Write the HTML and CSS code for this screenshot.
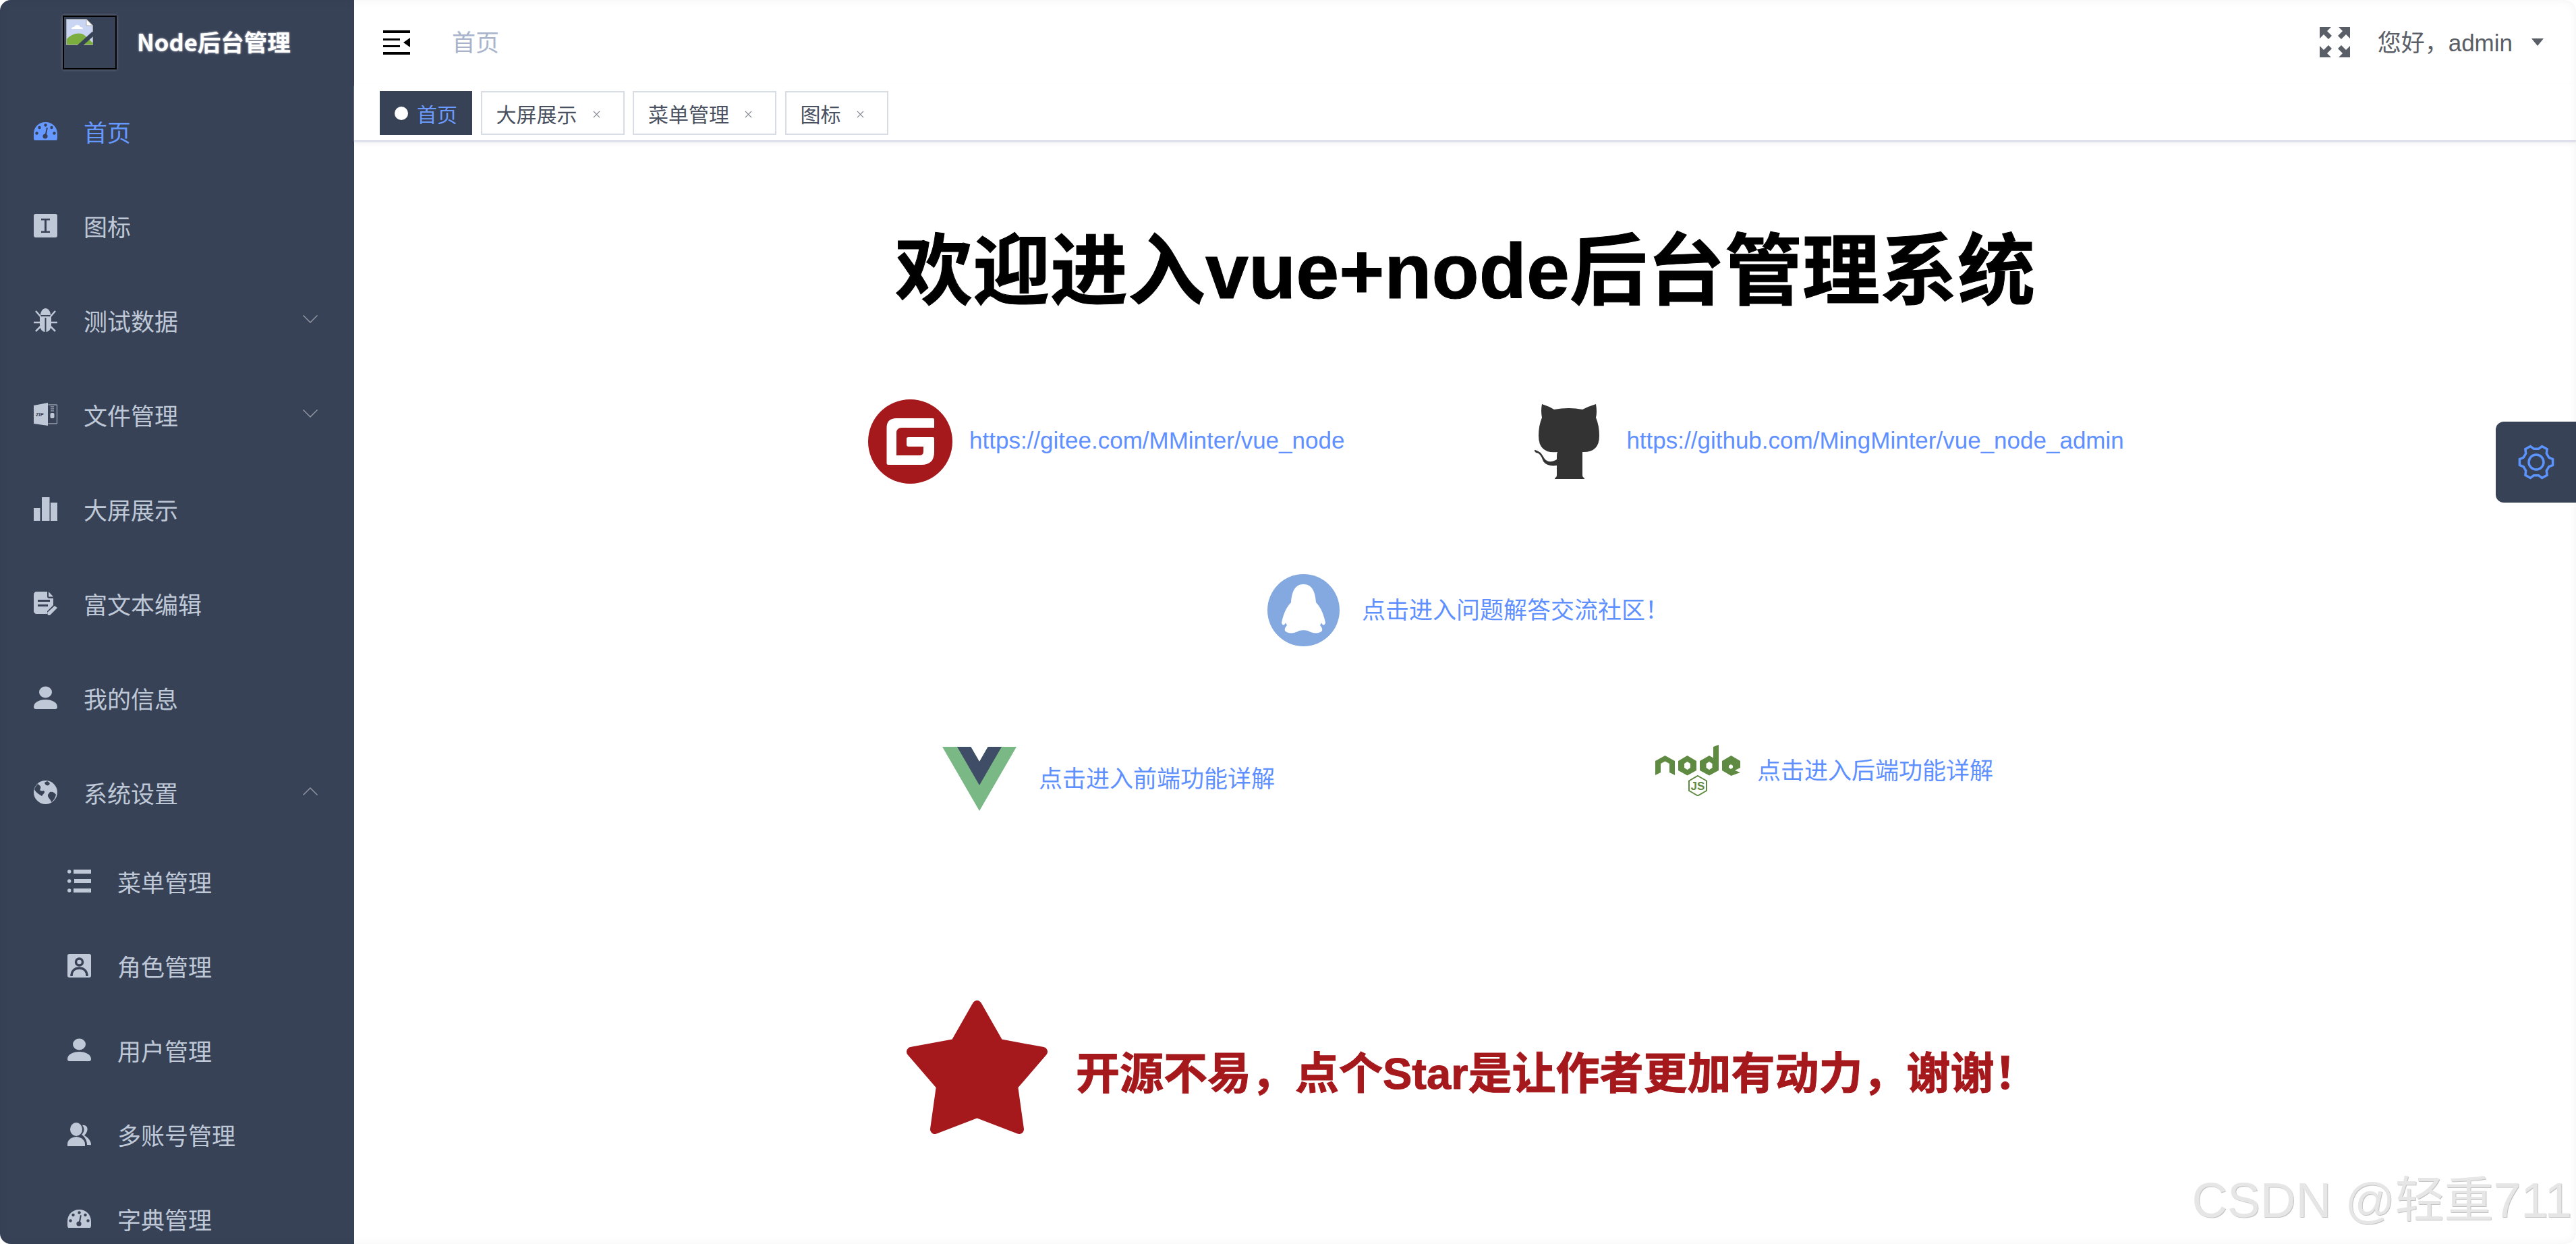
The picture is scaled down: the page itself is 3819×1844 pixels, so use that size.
FILE: index.html
```html
<!DOCTYPE html>
<html lang="zh-CN">
<head>
  <meta charset="UTF-8">
  <title>Node后台管理</title>
  <link rel="stylesheet" href="styles.css">
</head>
<body>
  <svg class="icon-defs" width="0" height="0">
    <symbol id="i-dashboard" viewBox="0 0 35 35">
      <path d="M1 31C-1 27 0 22 0 21C0 11 8 4 17.5 4S35 11 35 21C35 22 36 27 34 31Z"/>
      <g class="cut">
        <circle cx="17.5" cy="8.5" r="2.2"/><circle cx="8.5" cy="12" r="2.2"/><circle cx="26.5" cy="12" r="2.2"/>
        <circle cx="4.5" cy="20.5" r="2.2"/><circle cx="30.5" cy="20.5" r="2.2"/><circle cx="17" cy="25" r="3.6"/>
        <path d="M19 12l1.8.4-2 11-2.2-.4z"/>
      </g>
    </symbol>
    <symbol id="i-person" viewBox="0 0 35 35">
      <ellipse cx="17.5" cy="9" rx="9.5" ry="8.5"/>
      <path d="M0 31C0 24 8 20 17.5 20S35 24 35 31C35 33 34 34 32 34H3C1 34 0 33 0 31Z"/>
    </symbol>
  </svg>

  <div class="app">
    <aside class="sidebar">
      <div class="logo">
        <div class="logo-img">
          <svg class="broken-img" viewBox="0 0 40 39">
            <path d="M.5.5H30L39.500 10V38.500H.5Z" fill="#c9d5f2" stroke="#a8a8a8"/>
            <path d="M30 .5L39.500 10H30Z" fill="#fff" stroke="#a8a8a8"/>
            <path d="M8 15c0-3 3-3 4-3 1-4 8-4 9 0 3 0 4 1 4 3Z" fill="#fff"/>
            <path d="M1 38V30C8 22 20 19 27 24L40 36V38Z" fill="#7cad3f"/>
            <path d="M41 21L19 41" stroke="#384257" stroke-width="6"/>
          </svg>
        </div>
        <span class="logo-title">Node后台管理</span>
      </div>

      <nav class="menu">
        <a class="menu-item active">
          <svg class="menu-icon"><use href="#i-dashboard"/></svg>
          <span>首页</span>
        </a>
        <a class="menu-item">
          <svg class="menu-icon" viewBox="0 0 35 35">
            <rect width="35" height="35" rx="3"/>
            <path class="cut" d="M11 7H24V9.500H19V25.500H24V28H11V25.500H16V9.500H11Z"/>
          </svg>
          <span>图标</span>
        </a>
        <a class="menu-item">
          <svg class="menu-icon" viewBox="0 0 35 35">
            <path d="M10 10C10 4 14 0 17.500 0S25 4 25 10Z"/>
            <path d="M9 12H26V24C26 31 22 35 18.500 35V14H16.500V35C13 35 9 31 9 24Z"/>
            <path class="legs" d="M3 4L10 12M32 4L25 12M0 21H9M35 21H26M3 34L10 27M32 34L25 27"/>
          </svg>
          <span>测试数据</span>
          <svg class="chevron" viewBox="0 0 22 12"><path d="M.5 .5L11 11 21.500 .5"/></svg>
        </a>
        <a class="menu-item">
          <svg class="menu-icon" viewBox="0 0 35 35">
            <path d="M0 4L21 0V34L0 31Z"/>
            <text class="zip-text" x="3" y="20">ZIP</text>
            <path class="zip-line" d="M21.500 3H34.500V31H21.500M25 6H30M25 9H30M25 12H30"/>
            <rect x="24.500" y="15" width="6" height="8" rx="2"/>
          </svg>
          <span>文件管理</span>
          <svg class="chevron" viewBox="0 0 22 12"><path d="M.5 .5L11 11 21.500 .5"/></svg>
        </a>
        <a class="menu-item">
          <svg class="menu-icon" viewBox="0 0 35 35">
            <path d="M0 16H9.500V35H0ZM12 0H23.500V35H12ZM25 8H35V35H25Z"/>
          </svg>
          <span>大屏展示</span>
        </a>
        <a class="menu-item">
          <svg class="menu-icon" viewBox="0 0 35 35">
            <path d="M4 0H20V7C20 9 21 10 23 10H29V20L20 29V33H4C2 33 0 31 0 29V4C0 2 2 0 4 0ZM22 0L29 7.500H22Z"/>
            <path class="cut-line" d="M6 13.500H24M6 20.500H21"/>
            <path d="M21 35L20 31 31 21 35 24 24 35Z" class="pen"/>
          </svg>
          <span>富文本编辑</span>
        </a>
        <a class="menu-item">
          <svg class="menu-icon"><use href="#i-person"/></svg>
          <span>我的信息</span>
        </a>
        <a class="menu-item">
          <svg class="menu-icon" viewBox="0 0 35 35">
            <circle cx="17.500" cy="17.500" r="17.500"/>
            <path class="cut" d="M6 5C10 8 11 9 10 12 8 15 11 16 15 15 18 17 14 20 12 23 9 21 3 18 1 13 2 10 4 7 6 5ZM20 1C24 3 25 5 22 7 18 8 17 6 16 3ZM24 17C28 16 31 18 33 21 32 26 29 30 26 32 25 27 20 25 21 21Z"/>
          </svg>
          <span>系统设置</span>
          <svg class="chevron" viewBox="0 0 22 12"><path d="M.5 11.500L11 1 21.500 11.500"/></svg>
        </a>
        <div class="submenu">
          <a class="submenu-item">
            <svg class="menu-icon" viewBox="0 0 35 35">
              <circle cx="2.700" cy="3" r="2.700"/><circle cx="2.700" cy="17" r="2.700"/><circle cx="2.700" cy="31" r="2.700"/>
              <path d="M9 0H35V6H9ZM10 14H35V20H10ZM9 28H35V34H9Z"/>
            </svg>
            <span>菜单管理</span>
          </a>
          <a class="submenu-item">
            <svg class="menu-icon" viewBox="0 0 35 35">
              <rect width="35" height="35" rx="3"/>
              <circle class="ring" cx="17.500" cy="12" r="5"/>
              <path class="ring" d="M6 33C6 25 11 21 17.500 21S29 25 29 33"/>
            </svg>
            <span>角色管理</span>
          </a>
          <a class="submenu-item">
            <svg class="menu-icon"><use href="#i-person"/></svg>
            <span>用户管理</span>
          </a>
          <a class="submenu-item">
            <svg class="menu-icon" viewBox="0 0 35 35">
              <ellipse cx="13" cy="10" rx="9" ry="10"/>
              <path d="M0 32C0 26 5 22 13 21 21 22 26 26 26 32V35H0Z"/>
              <path d="M22 4C28 3 31 8 29 13 28 16 26 18 25 19 30 22 35 27 35 32 35 33 34 34 32 33H29C29 27 26 21 21 18 25 14 26 9 22 4Z"/>
            </svg>
            <span>多账号管理</span>
          </a>
          <a class="submenu-item">
            <svg class="menu-icon"><use href="#i-dashboard"/></svg>
            <span>字典管理</span>
          </a>
        </div>
      </nav>
    </aside>

    <div class="main">
      <header class="navbar">
        <svg class="hamburger" viewBox="0 0 40 36">
          <path d="M0 0H40V4H0ZM0 12H25V15H0ZM0 22H25V25H0ZM0 32H40V36H0Z"/>
          <path d="M40 11V25L30 18Z"/>
        </svg>
        <span class="crumb">首页</span>
        <div class="nav-right">
          <svg class="expand" viewBox="0 0 45 45">
            <path d="M0 0H17L11 6 18 13 13 18 6 11 0 17Z"/>
            <path d="M45 0H28L34 6 27 13 32 18 39 11 45 17Z"/>
            <path d="M0 45H17L11 39 18 32 13 27 6 34 0 28Z"/>
            <path d="M45 45H28L34 39 27 32 32 27 39 34 45 28Z"/>
          </svg>
          <span class="user">您好，admin</span>
          <span class="caret"></span>
        </div>
      </header>

      <div class="tags">
        <span class="tag tag-active"><i class="tag-dot"></i>首页</span>
        <span class="tag">大屏展示<svg class="tag-x" viewBox="0 0 12 12"><path d="M1 1L11 11M11 1L1 11"/></svg></span>
        <span class="tag">菜单管理<svg class="tag-x" viewBox="0 0 12 12"><path d="M1 1L11 11M11 1L1 11"/></svg></span>
        <span class="tag">图标<svg class="tag-x" viewBox="0 0 12 12"><path d="M1 1L11 11M11 1L1 11"/></svg></span>
      </div>

      <section class="welcome">
        <h1 class="welcome-title">欢迎进入vue+node后台管理系统</h1>

        <div class="row row-repos">
          <a class="link link-gitee">
            <svg class="logo-gitee" viewBox="0 0 125 125">
              <circle cx="62.500" cy="62.500" r="62.500" fill="#a5181c"/>
              <path fill="#fff" d="M42 28H96Q98 28 98 30V42H50Q42 42 42 50V83H76Q82 83 82 77V70H60Q57 70 57 67V58Q57 56 60 56H96Q98 56 98 58V78Q98 97 79 97H30Q27.500 97 27.500 95V42Q27.500 28 42 28Z"/>
            </svg>
            <span>https://gitee.com/MMinter/vue_node</span>
          </a>
          <a class="link link-github">
            <svg class="logo-github" viewBox="0 0 97 111">
              <path fill="#333" d="M12 0Q22 3 30 8 52 4 72 8 82 3 92 0 94 12 92 20 97 32 97 47 97 72 72 71 72 75 72 78V106Q72 108 75 110V111H31V110Q34 108 34 106V91Q20 93 14 85 10 72 3 72-1 68 2 68 10 70 14 78 20 90 34 82V78Q34 73 35 71 7 74 7 47 7 32 12 20 10 10 12 0Z"/>
            </svg>
            <span>https://github.com/MingMinter/vue_node_admin</span>
          </a>
        </div>

        <div class="row row-qq">
          <a class="link">
            <svg class="logo-qq" viewBox="0 0 107 107">
              <circle cx="53.500" cy="53.500" r="53.500" fill="#84a8e0"/>
              <path fill="#fff" d="M53.500 15C66 15 71 26 72 42 80 50 84 62 86 72 85 76 82 77 80 72L78 76C80 78 82 81 81 84 78 88 68 89 60 84 57 83 50 83 47 84 39 89 29 88 26 84 25 81 27 78 29 76L27 72C25 77 22 76 21 72 23 62 27 50 35 42 36 26 41 15 53.500 15Z"/>
            </svg>
            <span>点击进入问题解答交流社区！</span>
          </a>
        </div>

        <div class="row row-stack">
          <a class="link link-vue">
            <svg class="logo-vue" viewBox="0 0 261.760 226.690" preserveAspectRatio="none">
              <path fill="#7ab986" d="M161.096.001l-30.225 52.351L100.647.001H-.005l130.877 226.688L261.749.001z"/>
              <path fill="#3f4e66" d="M161.096.001l-30.225 52.351L100.647.001H52.346l78.526 136.01L209.398.001z"/>
            </svg>
            <span>点击进入前端功能详解</span>
          </a>
          <a class="link link-node">
            <svg class="logo-node" viewBox="0 0 126 76">
              <g fill="#5f8a41" fill-rule="evenodd">
                <path d="M0 24L14.500 16 29 24V45L21 41V28L14.500 24.500 8 28V41L0 45Z"/>
                <path d="M47.500 16L61 24V38L47.500 45.500 34 38V24ZM47.500 25L43 28V34L47.500 37 52 34V28Z"/>
                <path d="M94 0V38L80 45.500 66 38V24L80 16 86 19.500V3ZM80 25L75.500 28V34L80 37 84.500 34V28Z"/>
                <path d="M112.500 16L126 24V34L118 38 126 41 112.500 46 99 38V24ZM112 29L109 31V34L112 36 115 34V31Z"/>
              </g>
              <path d="M63 46L76 53.500V68L63 75.500 50 68V53.500Z" fill="none" stroke="#5f8a41" stroke-width="2"/>
              <text class="node-js" x="63" y="67">JS</text>
            </svg>
            <span>点击进入后端功能详解</span>
          </a>
        </div>

        <div class="row row-star">
          <svg class="star" viewBox="0 0 209 198">
            <polygon points="104.500,7 137,64 202,76 158,127 167,191 104.500,167 42,191 51,127 7,76 72,64"/>
          </svg>
          <span class="star-text">开源不易，点个Star是让作者更加有动力，谢谢！</span>
        </div>
      </section>
    </div>

    <div class="settings">
      <svg viewBox="-27 -27 54 54">
        <polygon points="24.600,4.300 18.800,6.800 15.300,12.900 16.100,19.200 8.600,23.500 3.500,19.700 -3.500,19.700 -8.600,23.500 -16.100,19.200 -15.300,12.900 -18.800,6.800 -24.600,4.300 -24.600,-4.300 -18.800,-6.800 -15.300,-12.900 -16.100,-19.200 -8.600,-23.500 -3.500,-19.700 3.500,-19.700 8.600,-23.500 16.100,-19.200 15.300,-12.900 18.800,-6.800 24.600,-4.300"/>
        <circle r="11"/>
      </svg>
    </div>

    <div class="watermark">CSDN @轻重711</div>
  </div>
</body>
</html>
```

FILE: styles.css
```css
* {
  box-sizing: border-box;
}

html, body {
  margin: 0;
  height: 100%;
  background: #fff;
}

body {
  font-family: "Liberation Sans", "Noto Sans CJK SC", sans-serif;
  font-size: 35px;
  overflow: hidden;
}

.icon-defs {
  position: absolute;
}

.app {
  position: relative;
  display: flex;
  height: 100vh;
  overflow: hidden;
  border-radius: 16px;
}

.app::after {
  content: "";
  position: absolute;
  inset: 0;
  border-radius: 16px;
  box-shadow: inset 0 0 14px rgba(0, 0, 0, 0.05);
  pointer-events: none;
}

/* sidebar */
.sidebar {
  flex: 0 0 525px;
  height: 100%;
  overflow: hidden;
  background: #384257;
  color: #bfc8d6;
  --cut: #384257;
}

.logo {
  display: flex;
  align-items: center;
  height: 128px;
  padding: 0 0 2px 93px;
}

.logo-img {
  width: 80px;
  height: 80px;
  padding: 3px;
  border: 2px solid #000;
  box-shadow: 0 0 4px rgba(255, 255, 255, 0.35);
}

.broken-img {
  display: block;
  width: 40px;
  height: 39px;
}

.logo-title {
  margin: 0 0 4px 30px;
  font-family: "Noto Sans CJK SC", sans-serif;
  font-size: 34.5px;
  font-weight: 700;
  color: #fff;
  text-shadow: 0 0 3px rgba(255, 255, 255, 0.8);
}

.menu-item,
.submenu-item {
  display: flex;
  align-items: center;
}

.menu-item span,
.submenu-item span {
  margin-bottom: 8px;
}

.menu-item {
  height: 140px;
  padding-left: 50px;
}

.submenu-item {
  height: 125px;
  padding-left: 100px;
}

.menu-icon {
  flex: none;
  width: 35px;
  height: 35px;
  margin: 0 39px 8px 0;
  fill: currentColor;
}

.active {
  color: #6699ff;
}

.cut {
  fill: var(--cut);
}

.legs {
  fill: none;
  stroke: currentColor;
  stroke-width: 2.5;
}

.zip-text {
  font-size: 7.5px;
  font-weight: 700;
  fill: #384257;
}

.zip-line {
  fill: none;
  stroke: currentColor;
  stroke-width: 1;
}

.cut-line {
  fill: none;
  stroke: #384257;
  stroke-width: 3;
}

.ring {
  fill: none;
  stroke: #384257;
  stroke-width: 3.5;
}

.chevron {
  width: 22px;
  height: 12px;
  margin: 0 54px 10px auto;
  fill: none;
  stroke: #8f95a1;
  stroke-width: 1.5;
}

/* top bar */
.main {
  flex: 1;
  display: flex;
  flex-direction: column;
  min-width: 0;
  background: #fff;
}

.navbar {
  display: flex;
  align-items: center;
  flex: 0 0 125px;
  padding: 0 48px 0 43px;
  box-shadow: 0 2px 10px rgba(0, 21, 41, 0.06);
}

.hamburger {
  width: 40px;
  height: 36px;
}

.crumb {
  margin: 0 0 5px 62px;
  color: #a9b4cc;
}

.nav-right {
  display: flex;
  align-items: center;
  margin-left: auto;
  color: #5a5e66;
}

.expand {
  width: 45px;
  height: 45px;
  margin-right: 41px;
  fill: #5a5e66;
}

.user {
  margin-bottom: 5px;
}

.caret {
  width: 0;
  height: 0;
  margin-left: 28px;
  border-style: solid;
  border-width: 11px 9px 0;
  border-color: #5a5e66 transparent transparent;
}

/* tags */
.tags {
  position: relative;
  display: flex;
  gap: 12.5px;
  flex: 0 0 83px;
  padding: 10px 0 0 38px;
  background: #fff;
  box-shadow: 0 2px 2px rgba(200, 205, 225, 0.8), 0 4px 8px rgba(0, 21, 41, 0.06);
}

.tag {
  display: flex;
  align-items: center;
  height: 65px;
  padding: 0 34px 0 21px;
  border: 2px solid #d8dce5;
  font-size: 30px;
  color: #495060;
  background: #fff;
}

.tag-active {
  padding: 0 22px;
  border: 0;
  background: #384257;
  color: #6b9bff;
}

.tag-dot {
  width: 20px;
  height: 20px;
  margin-right: 13px;
  border-radius: 50%;
  background: #fff;
}

.tag-x {
  width: 11px;
  height: 11px;
  margin: 4px 0 0 23px;
  fill: none;
  stroke: #777c88;
  stroke-width: 1.2;
}

/* welcome page */
.welcome {
  flex: 1;
}

.welcome-title {
  margin: 129px 0 0;
  font-size: 115px;
  line-height: 130px;
  font-weight: 700;
  text-align: center;
  color: #000;
  -webkit-text-stroke: 1px #000;
}

.row {
  display: flex;
  align-items: center;
}

.link {
  display: flex;
  align-items: center;
  color: #5f90ff;
}

.link span {
  margin-bottom: 6px;
}

.row-repos {
  margin-top: 125px;
  padding-left: 762px;
}

.row-repos .link span {
  margin-bottom: 3px;
}

.logo-gitee {
  width: 125px;
  height: 125px;
  margin-right: 25px;
}

.link-github {
  margin-left: 281px;
}

.logo-github {
  width: 97px;
  height: 111px;
  margin-right: 40px;
}

.row-qq {
  margin-top: 134px;
  padding-left: 1354px;
}

.logo-qq {
  width: 107px;
  height: 107px;
  margin-right: 33px;
}

.row-stack {
  align-items: flex-start;
  margin-top: 146px;
  padding-left: 872px;
}

.link-vue {
  margin-top: 3px;
}

.logo-vue {
  width: 110px;
  height: 95px;
  margin-right: 33px;
}

.link-node {
  margin-left: 564px;
}

.logo-node {
  width: 126px;
  height: 76px;
  margin-right: 25px;
}

.node-js {
  font-size: 17px;
  font-weight: 700;
  text-anchor: middle;
  fill: #5f8a41;
}

.row-star {
  margin-top: 281px;
  padding-left: 819px;
}

.star {
  flex: none;
  width: 209px;
  height: 198px;
  fill: #a5181c;
  stroke: #a5181c;
  stroke-width: 14;
  stroke-linejoin: round;
}

.star-text {
  margin: 8px 0 0 42px;
  font-size: 65px;
  font-weight: 700;
  color: #a5181c;
  -webkit-text-stroke: 1px #a5181c;
  white-space: nowrap;
}

/* floating bits */
.settings {
  position: absolute;
  top: 625px;
  right: 0;
  display: flex;
  align-items: center;
  width: 119px;
  height: 120px;
  padding-left: 33px;
  border-radius: 12px 0 0 12px;
  background: #384257;
}

.settings svg {
  width: 54px;
  height: 54px;
  fill: none;
  stroke: #5b93ff;
  stroke-width: 3.5;
}

.watermark {
  position: absolute;
  right: 6px;
  bottom: 23px;
  font-size: 73px;
  line-height: 84px;
  color: #e6e6e6;
  text-shadow: 1px 1px 0 #c4c4c4;
  white-space: nowrap;
}
```
